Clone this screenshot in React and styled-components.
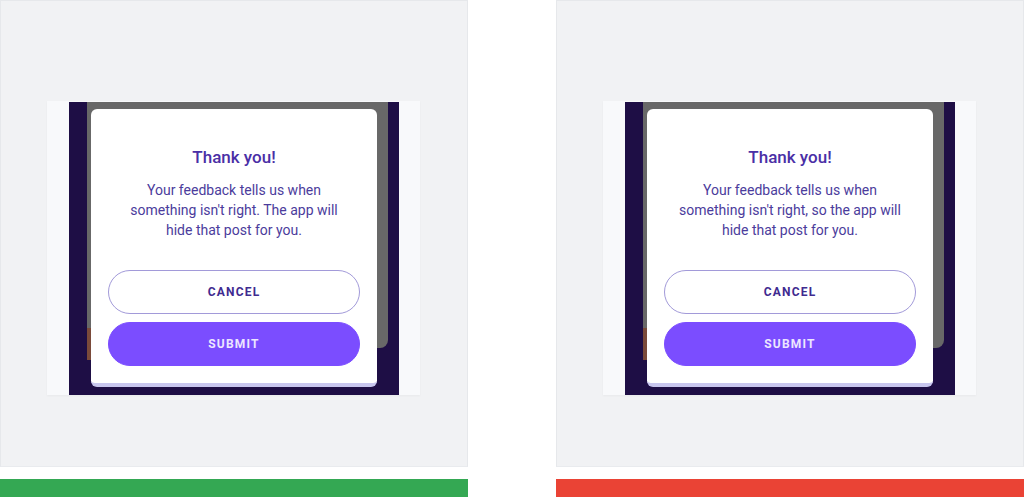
import React from 'react';
import styled, { createGlobalStyle } from 'styled-components';

const GlobalStyle = createGlobalStyle`
  html, body {
    margin: 0;
    padding: 0;
    background: #ffffff;
    font-family: Roboto, 'Liberation Sans', sans-serif;
  }
`;

// Two example columns side by side
const Page = styled.div`
  display: flex;
  justify-content: space-between;
  width: 1024px;
  height: 497px;
  overflow: hidden;
`;

const Column = styled.div`
  width: 468px;
  display: flex;
  flex-direction: column;
`;

const Panel = styled.div`
  box-sizing: border-box;
  height: 467px;
  background: #f1f2f4;
  border: 1px solid #e6e8eb;
  border-bottom-color: #e9ebee;
  padding: 100px 0 0 46px;
`;

const VerdictBar = styled.div`
  margin-top: 12px;
  height: 18px;
  background: ${(p) => (p.good ? '#34a853' : '#ea4335')};
`;

// Phone mock-up
const Phone = styled.div`
  box-sizing: border-box;
  width: 373px;
  height: 294px;
  padding: 1px 21px 0 22px;
  background: #f8f9fb;
  box-shadow: 0 1px 2px rgba(0, 0, 0, 0.04);
`;

const Screen = styled.div`
  position: relative;
  height: 100%;
  background: #1e0e45;
  overflow: hidden;
`;

// dimmed app content behind the dialog
const Backdrop = styled.div`
  position: absolute;
  left: 18px;
  top: 0;
  width: 301px;
  height: 246px;
  background: #686868;
  border-bottom-right-radius: 8px;
`;

const BackdropEdge = styled.div`
  position: absolute;
  left: 18px;
  top: 226px;
  width: 4px;
  height: 32px;
  background: #7a4a3a;
`;

const Dialog = styled.div`
  position: absolute;
  left: 22px;
  top: 7px;
  box-sizing: border-box;
  width: 286px;
  height: 278px;
  background: #ffffff;
  border-radius: 6px;
  border-bottom: 4px solid #c8c6ee;
  padding: 37px 17px 0;
  display: flex;
  flex-direction: column;
  align-items: stretch;
  text-align: center;
`;

const Title = styled.h2`
  margin: 0;
  font-size: 17px;
  line-height: 22px;
  font-weight: 500;
  color: #4a2fa6;
`;

const Body = styled.p`
  margin: 12px -6px 0;
  font-size: 14px;
  line-height: 20px;
  color: #4b3c9c;
`;

const Actions = styled.div`
  margin-top: 30px;
  display: flex;
  flex-direction: column;
  gap: 8px;
`;

const Button = styled.button`
  box-sizing: border-box;
  height: 44px;
  width: 100%;
  border-radius: 22px;
  font-family: Roboto, 'Liberation Sans', sans-serif;
  font-size: 12px;
  font-weight: 700;
  letter-spacing: 1.2px;
  border: 1px solid ${(p) => (p.primary ? '#7b4dff' : '#a29ad9')};
  background: ${(p) => (p.primary ? '#7b4dff' : '#ffffff')};
  color: ${(p) => (p.primary ? '#ece6ff' : '#3f2b90')};
  cursor: pointer;
`;

const Example = ({ good, lines }) => (
  <Column>
    <Panel>
      <Phone>
        <Screen>
          <Backdrop />
          <BackdropEdge />
          <Dialog>
            <Title>Thank you!</Title>
            <Body>
              {lines.map((l, i) => (
                <React.Fragment key={i}>
                  {l}
                  {i < lines.length - 1 && <br />}
                </React.Fragment>
              ))}
            </Body>
            <Actions>
              <Button>CANCEL</Button>
              <Button primary>SUBMIT</Button>
            </Actions>
          </Dialog>
        </Screen>
      </Phone>
    </Panel>
    <VerdictBar good={good} />
  </Column>
);

const App = () => (
  <>
    <GlobalStyle />
    <Page>
      <Example
        good
        lines={[
          'Your feedback tells us when',
          "something isn't right. The app will",
          'hide that post for you.',
        ]}
      />
      <Example
        lines={[
          'Your feedback tells us when',
          "something isn't right, so the app will",
          'hide that post for you.',
        ]}
      />
    </Page>
  </>
);

export default App;
